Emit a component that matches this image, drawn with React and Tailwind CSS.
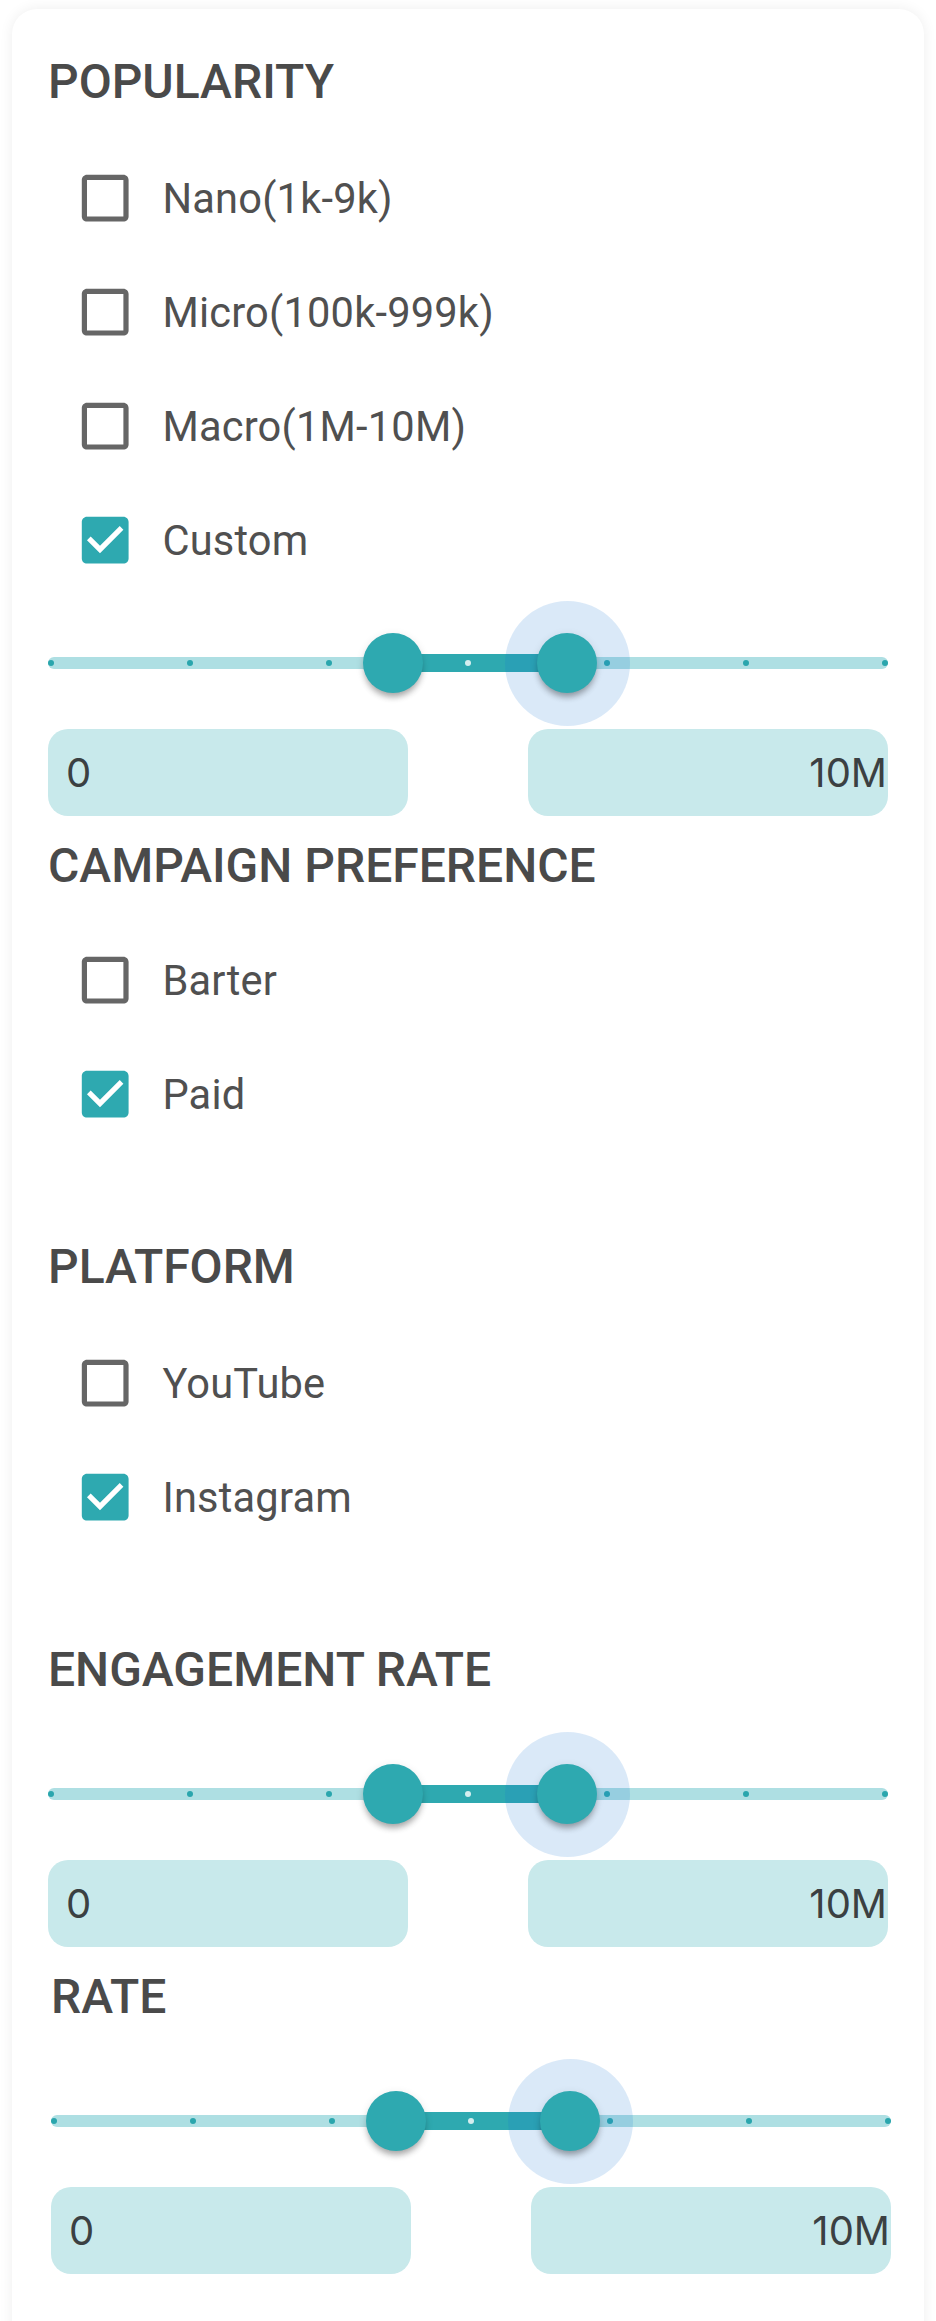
import React from "react";

const TEAL = "#2ea9b0";

function Heading({ children, className = "" }) {
  return (
    <h2 className={"text-[48px] leading-[56px] font-medium text-[#4a4a4a] " + className}>
      {children}
    </h2>
  );
}

function CheckIcon({ checked }) {
  return (
    <svg viewBox="0 0 24 24" className="w-[62.4px] h-[62.4px] shrink-0" fill={checked ? TEAL : "#666666"}>
      {checked ? (
        <path d="M19 3H5c-1.11 0-2 .9-2 2v14c0 1.1.89 2 2 2h14c1.11 0 2-.9 2-2V5c0-1.1-.89-2-2-2zm-9 14l-5-5 1.41-1.41L10 14.17l7.59-7.59L19 8l-9 9z" />
      ) : (
        <path d="M19 5v14H5V5h14m0-2H5c-1.1 0-2 .9-2 2v14c0 1.1.9 2 2 2h14c1.1 0 2-.9 2-2V5c0-1.1-.9-2-2-2z" />
      )}
    </svg>
  );
}

function Row({ label, checked }) {
  return (
    <div className="h-[114px] flex items-center pl-[26px]">
      <CheckIcon checked={checked} />
      <span className="ml-[26px] pt-[2px] text-[41.6px] leading-normal tracking-[0.2px] text-[#505050]">{label}</span>
    </div>
  );
}

const MARKS = [0, 1, 2, 3, 4, 5, 6];

function Slider({ className = "" }) {
  return (
    <div className={"relative h-[132px] w-[840px] " + className}>
      <div className="absolute left-0 top-[60px] w-[840px] h-[12px] rounded-full bg-[#aedfe3]" />
      <div className="absolute left-[345px] top-[57px] w-[174px] h-[18px] bg-[#2ea9b0]" />
      {MARKS.map((k) => {
        const c = 3 + 139 * k;
        const active = c > 345 && c < 519;
        return (
          <div
            key={k}
            className={
              "absolute top-[63px] w-[6px] h-[6px] rounded-full " +
              (active ? "bg-[#d5eeef]" : "bg-[#2aa6ad]")
            }
            style={{ left: c - 3 }}
          />
        );
      })}
      <div className="absolute left-[456.5px] top-[3.5px] w-[125px] h-[125px] rounded-full bg-[rgba(25,118,210,0.16)]" />
      <div className="absolute left-[315px] top-[36px] w-[60px] h-[60px] rounded-full bg-[#2ea9b0] shadow-[0_6px_6px_-2px_rgba(0,0,0,0.3),0_2px_8px_rgba(0,0,0,0.1)]" />
      <div className="absolute left-[489px] top-[36px] w-[60px] h-[60px] rounded-full bg-[#2ea9b0] shadow-[0_6px_6px_-2px_rgba(0,0,0,0.3),0_2px_8px_rgba(0,0,0,0.1)]" />
    </div>
  );
}

function Inputs() {
  return (
    <div className="flex justify-between w-[840px] font-['Inter',sans-serif] text-[40px] text-[#3b4042]">
      <div className="w-[360px] h-[87px] rounded-[20px] bg-[#c8e9eb] flex items-center pl-[18px]">0</div>
      <div className="w-[360px] h-[87px] rounded-[20px] bg-[#c8e9eb] flex items-center justify-end pr-[1px]">10M</div>
    </div>
  );
}

export default function App() {
  return (
    <div className="w-[936px] h-[2321px] overflow-hidden bg-white font-['Roboto','Liberation_Sans',sans-serif]">
      <div className="mx-[12px] mt-[9px] rounded-[25px] bg-white shadow-[0_0_14px_rgba(0,0,0,0.07)] pl-[36px] pr-[36px] pt-[45px] pb-[140px]">
        <Heading>POPULARITY</Heading>
        <div className="mt-[31px]">
          <Row label="Nano(1k-9k)" />
          <Row label="Micro(100k-999k)" />
          <Row label="Macro(1M-10M)" />
          <Row label="Custom" checked />
        </div>
        <Slider />
        <Inputs />

        <Heading className="mt-[22px]">CAMPAIGN PREFERENCE</Heading>
        <div className="mt-[29px]">
          <Row label="Barter" />
          <Row label="Paid" checked />
        </div>

        <Heading className="mt-[88px]">PLATFORM</Heading>
        <div className="mt-[31px]">
          <Row label="YouTube" />
          <Row label="Instagram" checked />
        </div>

        <Heading className="mt-[88px]">ENGAGEMENT RATE</Heading>
        <Slider className="mt-[30px]" />
        <Inputs />

        <div className="ml-[3px] pt-[22px]">
          <Heading>RATE</Heading>
          <Slider className="mt-[30px]" />
          <Inputs />
        </div>
      </div>
    </div>
  );
}
